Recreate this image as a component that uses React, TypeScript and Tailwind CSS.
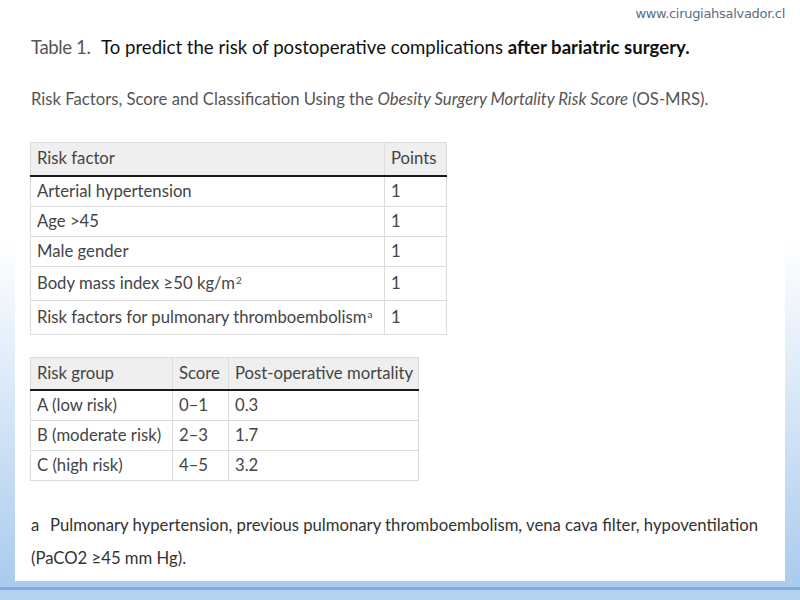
import React from 'react';

const factors = [
  { name: 'Arterial hypertension', pts: '1', h: 'h-[31px]' },
  { name: 'Age >45', pts: '1', h: 'h-[30px]' },
  { name: 'Male gender', pts: '1', h: 'h-[30px]' },
  { name: 'Body mass index ≥50 kg/m', sup: '2', pts: '1', h: 'h-[34px]' },
  { name: 'Risk factors for pulmonary thromboembolism', sup: 'a', pts: '1', h: 'h-[34px]' },
];

const groups = [
  { group: 'A (low risk)', score: '0–1', mort: '0.3', h: 'h-[31px]' },
  { group: 'B (moderate risk)', score: '2–3', mort: '1.7', h: 'h-[30px]' },
  { group: 'C (high risk)', score: '4–5', mort: '3.2', h: 'h-[30px]' },
];

const cell = 'border border-[#dcdcdc] px-[6px] text-left align-middle font-normal whitespace-nowrap';
const head = 'border border-[#dcdcdc] border-b-2 border-b-[#1a1a1a] bg-[#efefef] px-[6px] text-left align-middle font-normal whitespace-nowrap';

export default function App() {
  return (
    <div className="w-[800px] h-[600px] flex flex-col bg-linear-to-b from-white from-40% to-[#a7c9ec] font-['Lato',sans-serif]">
      <div className="mx-[15px] h-[581px] bg-white text-[#444]">
        <div className="flex justify-end pr-0 pt-[4px] h-[26px] text-[13px] text-[#5b6d85] font-['DejaVu_Sans',sans-serif] tracking-[-0.3px]">
          www.cirugiahsalvador.cl
        </div>
        <div className="flex pl-[16px] mt-[9px] text-[18.6px] leading-[24px]">
          <span className="text-[#555] w-[70px] tracking-[-0.4px]">Table 1.</span>
          <span className="text-[#111]">
            To predict the risk of postoperative complications <b className="font-bold">after bariatric surgery.</b>
          </span>
        </div>
        <div className="pl-[16px] mt-[29px] text-[16.7px] leading-[22px] text-[#555]">
          Risk Factors, Score and Classification Using the <i>Obesity Surgery Mortality Risk Score</i> (OS-MRS).
        </div>

        <table className="ml-[15px] mt-[32px] border-collapse text-[16.7px] text-[#444] w-[416px] table-fixed">
          <colgroup>
            <col className="w-[354px]" />
            <col className="w-[62px]" />
          </colgroup>
          <thead>
            <tr className="h-[33px]">
              <th className={head}>Risk factor</th>
              <th className={head}>Points</th>
            </tr>
          </thead>
          <tbody>
            {factors.map(f => (
              <tr key={f.name} className={f.h}>
                <td className={cell}>
                  {f.name}
                  {f.sup && <sup className="text-[10px] ml-[1px]">{f.sup}</sup>}
                </td>
                <td className={cell}>{f.pts}</td>
              </tr>
            ))}
          </tbody>
        </table>

        <table className="ml-[15px] mt-[22px] border-collapse text-[16.7px] text-[#444] w-[388px] table-fixed">
          <colgroup>
            <col className="w-[142px]" />
            <col className="w-[56px]" />
            <col className="w-[190px]" />
          </colgroup>
          <thead>
            <tr className="h-[32px]">
              <th className={head}>Risk group</th>
              <th className={head}>Score</th>
              <th className={head}>Post-operative mortality</th>
            </tr>
          </thead>
          <tbody>
            {groups.map(g => (
              <tr key={g.group} className={g.h}>
                <td className={cell}>{g.group}</td>
                <td className={cell}>{g.score}</td>
                <td className={cell}>{g.mort}</td>
              </tr>
            ))}
          </tbody>
        </table>

        <div className="pl-[16px] mt-[28px] text-[16.7px] leading-[33px] text-[#333]">
          <div className="flex whitespace-nowrap">
            <span className="w-[19px]">a</span>
            <span>Pulmonary hypertension, previous pulmonary thromboembolism, vena cava filter, hypoventilation</span>
          </div>
          <div>(PaCO2 ≥45 mm Hg).</div>
        </div>
      </div>
      <div className="flex-1 flex flex-col">
        <div className="h-[6px] bg-[#a9ccee]" />
        <div className="h-[3px] bg-[#7ea9d8]" />
        <div className="flex-1 bg-[#b3d2f0]" />
      </div>
    </div>
  );
}
